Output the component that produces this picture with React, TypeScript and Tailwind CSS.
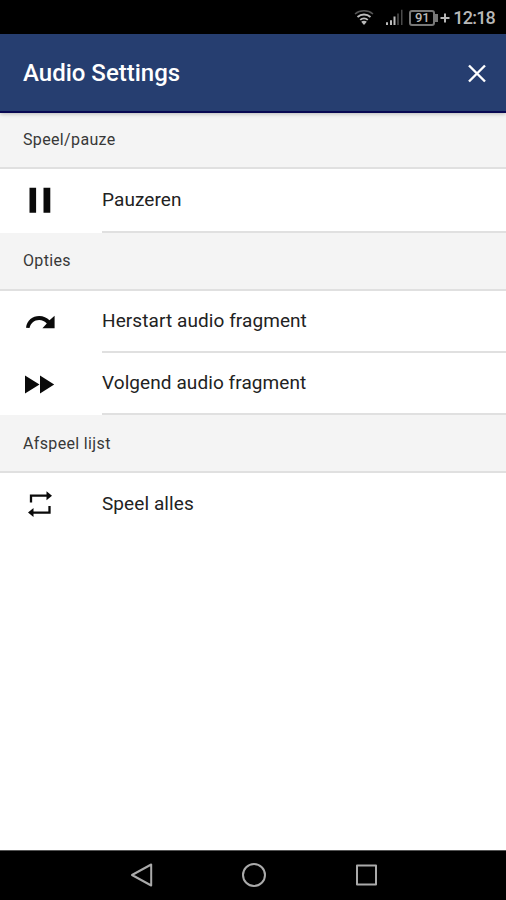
import type { ReactNode } from 'react'

// ─── Icons ────────────────────────────────────────────────────────────────────

function PauseIcon() {
  return (
    <svg className="h-8 w-8" viewBox="0 0 32 32" fill="#0a0a0a" aria-hidden="true">
      <path d="M5.500 2.800h6.600v25H5.500zM19.500 2.800h6.800v25h-6.800z" />
    </svg>
  )
}

function RedoIcon() {
  return (
    <svg className="h-8 w-8" viewBox="0 0 32 32" fill="#0a0a0a" aria-hidden="true">
      <path d="M2 21.800C3 14.500 8.500 10.100 15.200 10.100c4.100 0 7.700 1.600 10.300 4.200L30.600 9.700V22.300H18.400l4.400-4.900c-2-2.100-4.600-3.500-7.600-3.500-4.900 0-8.700 3.200-9.700 8.200z" />
    </svg>
  )
}

function ForwardIcon() {
  return (
    <svg className="h-8 w-8" viewBox="0 0 32 32" fill="#0a0a0a" aria-hidden="true">
      <path d="M1 7.500L15.500 16.400 1 25.400zM16 7.500L30.200 16.400 16 25.400z" />
    </svg>
  )
}

function RepeatIcon() {
  return (
    <svg className="h-8 w-8" viewBox="0 0 32 32" aria-hidden="true">
      <path
        d="M7 14.500V7.700H24M25.500 17.900v6.700H8"
        fill="none"
        stroke="#0a0a0a"
        strokeWidth="2.300"
      />
      <path d="M22.500 3.300L28 7.700l-5.500 4.500zM9.500 20.100L4 24.600l5.500 4.500z" fill="#0a0a0a" />
    </svg>
  )
}

// ─── Status bar ───────────────────────────────────────────────────────────────

function StatusBar() {
  return (
    <div className="flex h-[34px] shrink-0 items-center justify-end bg-black pt-px pr-[11px] text-[#b8b8b8]">
      <svg className="mr-[12px] h-[17px] w-[20px]" viewBox="0 0 20 17" fill="none" aria-hidden="true">
        <path d="M1 5C6 .8 14 .8 19 5" stroke="#555" strokeWidth="1.500" />
        <path d="M3.500 8c3.700-3.300 9.300-3.300 13 0M6.200 10.900c2.200-1.900 5.400-1.900 7.600 0" stroke="#bcbcbc" strokeWidth="1.900" />
        <path d="M7.200 12.700c1.600-1.300 4-1.300 5.600 0L10 16z" fill="#bcbcbc" />
      </svg>
      <svg className="mr-[6px] h-[17px] w-[17px]" viewBox="0 0 17 17" aria-hidden="true">
        <path d="M0 13.200h2V16H0zM4 11.200h2V16H4zM7.500 7.500h2V16h-2z" fill="#bcbcbc" />
        <path d="M11.200 4.500h1.600V16h-1.600zM15 .8h1.500V16H15z" fill="#4a4a4a" />
      </svg>
      <div className="flex h-[16px] w-[26px] items-center justify-center rounded-[3px] border-2 border-[#777] font-['Roboto'] text-[13px] leading-none font-medium">
        91
      </div>
      <div className="h-[8px] w-[3px] bg-[#777]" />
      <svg className="mx-[2px] h-[10px] w-[10px]" viewBox="0 0 10 10" aria-hidden="true">
        <path d="M5 .5v9M.5 5h9" stroke="#b8b8b8" strokeWidth="2" />
      </svg>
      <span className="ml-px font-['Roboto'] text-[18px] leading-none font-medium tracking-[-0.8px]">12:18</span>
    </div>
  )
}

// ─── List parts ───────────────────────────────────────────────────────────────

function SectionHeader({ children, className }: { children: ReactNode; className: string }) {
  return (
    <h2
      className={`flex shrink-0 items-center border-b-2 border-[#e0e0e0] bg-[#f4f4f4] pl-[23px] font-['Roboto'] text-[16px] tracking-[0.35px] text-[#383838] ${className}`}
    >
      {children}
    </h2>
  )
}

interface ListItemProps {
  icon: ReactNode
  label: string
  className?: string
  divider?: boolean
}

function ListItem({ icon, label, className = 'h-[62px]', divider = true }: ListItemProps) {
  return (
    <button type="button" className={`flex w-full shrink-0 items-stretch text-left ${className}`}>
      <span className="flex w-[102px] items-center pl-[24px]">{icon}</span>
      <span
        className={`flex flex-1 items-center font-['Roboto'] text-[19px] tracking-[0.08px] text-[#222] ${divider ? 'border-b-2 border-[#e0e0e0]' : ''}`}
      >
        {label}
      </span>
    </button>
  )
}

// ─── Navigation bar ───────────────────────────────────────────────────────────

function NavigationBar() {
  return (
    <div className="flex h-[50px] shrink-0 items-center justify-center gap-[86px] border-t border-[#555] bg-black pb-px pl-px">
      <svg className="h-[26px] w-[26px]" viewBox="0 0 26 26" fill="none" stroke="#aaa" strokeWidth="2" strokeLinejoin="round" aria-hidden="true">
        <path d="M22.200 2.500v21L3 13z" />
      </svg>
      <svg className="h-[26px] w-[26px]" viewBox="0 0 26 26" fill="none" stroke="#aaa" strokeWidth="2" aria-hidden="true">
        <circle cx="13" cy="13" r="11" />
      </svg>
      <svg className="h-[26px] w-[26px]" viewBox="0 0 26 26" fill="none" stroke="#aaa" strokeWidth="2" strokeLinejoin="round" aria-hidden="true">
        <path d="M4 3.500h19v19H4z" />
      </svg>
    </div>
  )
}

// ─── Main view ────────────────────────────────────────────────────────────────

export default function App() {
  return (
    <div className="flex h-screen w-full flex-col overflow-hidden bg-white font-['Roboto']">
      <StatusBar />

      <header className="z-10 flex h-[79px] shrink-0 items-center justify-between border-b-2 border-[#080852] bg-[#263e70] pr-[19px] pl-[23px] shadow-[0_1px_4px_rgba(0,0,0,0.25)]">
        <h1 className="text-[24px] leading-none font-medium text-white">Audio Settings</h1>
        <button type="button" aria-label="Sluiten">
          <svg className="h-[20px] w-[20px]" viewBox="0 0 20 20" fill="none" stroke="#fff" strokeWidth="2.400" aria-hidden="true">
            <path d="M2 2.500l16 16M18 2.500L2 18.500" />
          </svg>
        </button>
      </header>

      <main className="flex flex-1 flex-col">
        <SectionHeader className="h-[56px]">Speel/pauze</SectionHeader>
        <ListItem icon={<PauseIcon />} label="Pauzeren" className="h-[64px]" />

        <SectionHeader className="h-[58px]">Opties</SectionHeader>
        <ListItem icon={<RedoIcon />} label="Herstart audio fragment" />
        <ListItem icon={<ForwardIcon />} label="Volgend audio fragment" />

        <SectionHeader className="h-[58px] pt-px">Afspeel lijst</SectionHeader>
        <ListItem icon={<RepeatIcon />} label="Speel alles" divider={false} />
      </main>

      <NavigationBar />
    </div>
  )
}
